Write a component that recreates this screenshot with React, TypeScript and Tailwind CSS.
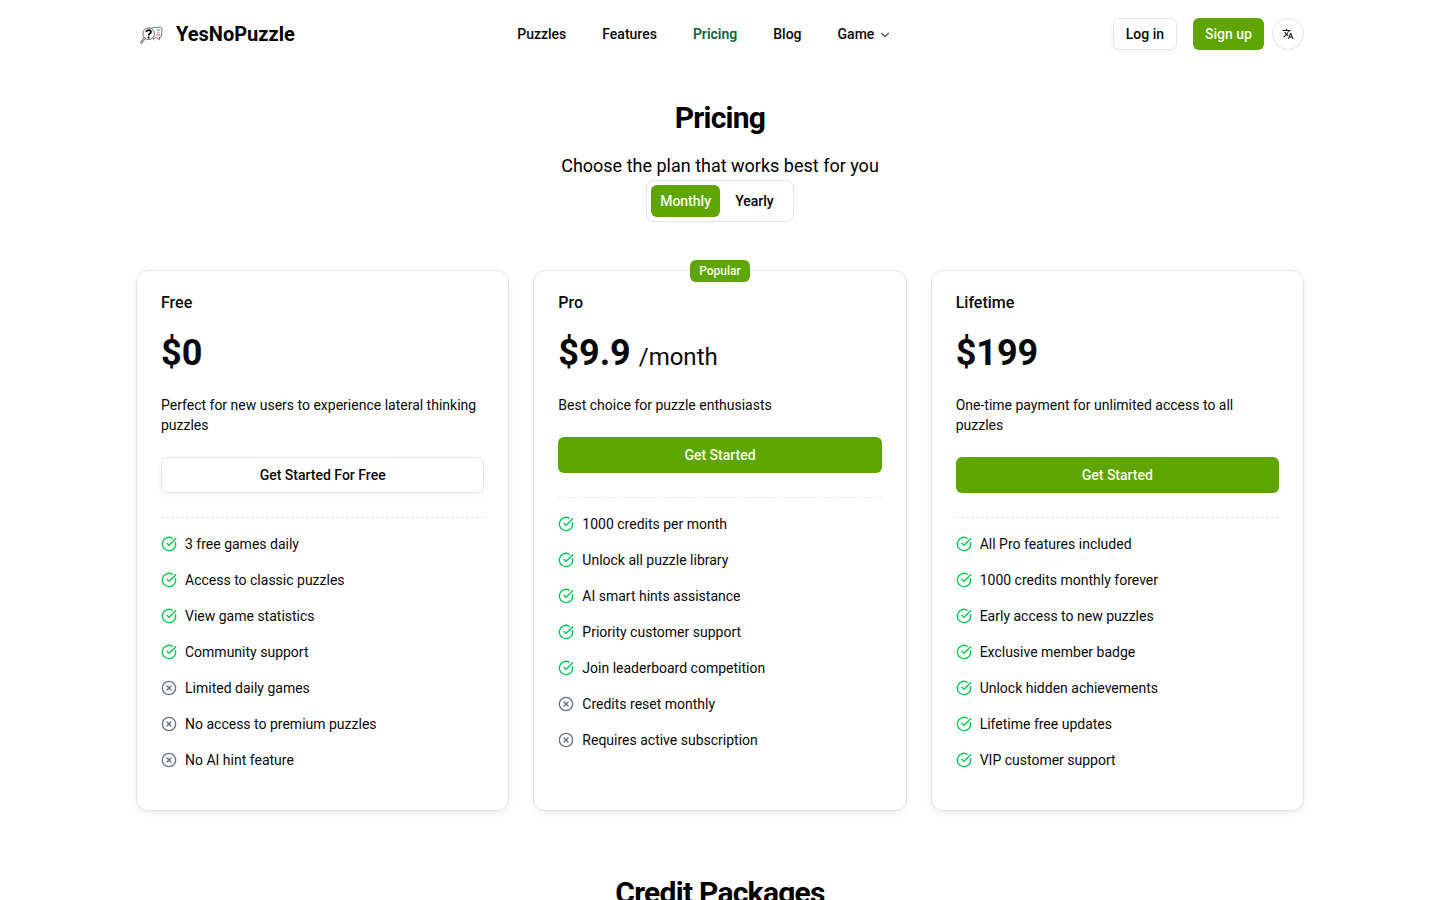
import { ChevronDown, CircleCheckBig, CircleX } from 'lucide-react';
import { MdTranslate } from 'react-icons/md';

type Plan = {
  name: string;
  price: string;
  period?: string;
  description: string;
  action: string;
  outlined?: boolean;
  popular?: boolean;
  features: string[];
  limits: string[];
};

const plans: Plan[] = [
  {
    name: 'Free',
    price: '$0',
    description: 'Perfect for new users to experience lateral thinking puzzles',
    action: 'Get Started For Free',
    outlined: true,
    features: ['3 free games daily', 'Access to classic puzzles', 'View game statistics', 'Community support'],
    limits: ['Limited daily games', 'No access to premium puzzles', 'No AI hint feature'],
  },
  {
    name: 'Pro',
    price: '$9.9',
    period: '/month',
    description: 'Best choice for puzzle enthusiasts',
    action: 'Get Started',
    popular: true,
    features: [
      '1000 credits per month',
      'Unlock all puzzle library',
      'AI smart hints assistance',
      'Priority customer support',
      'Join leaderboard competition',
    ],
    limits: ['Credits reset monthly', 'Requires active subscription'],
  },
  {
    name: 'Lifetime',
    price: '$199',
    description: 'One-time payment for unlimited access to all puzzles',
    action: 'Get Started',
    features: [
      'All Pro features included',
      '1000 credits monthly forever',
      'Early access to new puzzles',
      'Exclusive member badge',
      'Unlock hidden achievements',
      'Lifetime free updates',
      'VIP customer support',
    ],
    limits: [],
  },
];

const primary = 'bg-lime-600 text-lime-50';
const outline =
  'border border-neutral-200 bg-white text-neutral-950 shadow-[0_3px_6px_rgba(0,0,0,0.04)]';

function Logo() {
  return (
    <svg viewBox="0 0 32 32" className="size-8" fill="none" aria-hidden="true">
      <path
        d="M15 10.500 Q16 9.500 18 9.500 L24 9.200 Q26 9.200 26 11.200 L25.600 17 Q25.500 19.200 23.500 19.200 L23.600 21.800 L20.500 19.700 L17 20.500"
        stroke="#777"
        strokeWidth="1"
        fill="#fcfcfc"
      />
      <path d="M20.300 12h4" stroke="#7fd39b" strokeWidth="1.600" />
      <path d="M20.800 14.500h3" stroke="#efaaaa" strokeWidth="1.200" />
      <path d="M20 17h4" stroke="#e58f8f" strokeWidth="1.500" />
      <path d="M8.800 20 L5.200 24.400" stroke="#666" strokeWidth="2.400" strokeLinecap="round" />
      <path d="M8.800 20 L5.200 24.400" stroke="#eee" strokeWidth="0.900" strokeLinecap="round" />
      <circle cx="12.700" cy="15.700" r="5.800" fill="#fff" stroke="#666" strokeWidth="1" />
      <path
        d="M10.400 14.200 Q10.600 12.200 12.700 12.200 Q14.900 12.200 14.900 14 Q14.900 15.200 13.600 15.800 Q12.700 16.300 12.700 17.400"
        stroke="#000"
        strokeWidth="1.700"
      />
      <circle cx="12.700" cy="19.400" r="1" fill="#000" />
      <path d="M16.500 20.500l2 1.500" stroke="#888" strokeWidth="1" />
    </svg>
  );
}

function Header() {
  return (
    <header className="py-4">
      <div className="mx-auto flex h-9 max-w-[1200px] items-center justify-between px-4">
        <a href="#home" className="flex items-center gap-2 text-xl font-bold text-black">
          <Logo />
          YesNoPuzzle
        </a>
        <nav aria-label="Main" className="flex items-center gap-1 text-sm font-medium text-neutral-950">
          <a href="#puzzles" className="px-4">Puzzles</a>
          <a href="#features" className="px-4">Features</a>
          <a href="#pricing" aria-current="page" className="px-4 font-semibold text-[#166534]">Pricing</a>
          <a href="#blog" className="px-4">Blog</a>
          <button type="button" className="flex items-center gap-1 px-4">
            Game
            <ChevronDown className="mt-0.5 -mr-0.5 size-3.5 text-neutral-600" />
          </button>
        </nav>
        <div className="flex items-center gap-2 text-sm font-medium">
          <div className="flex items-center gap-4">
            <button type="button" className={`h-8 rounded-md px-3 ${outline}`}>Log in</button>
            <button type="button" className={`h-8 rounded-md px-3 ${primary}`}>Sign up</button>
          </div>
          <button
            type="button"
            aria-label="Change language"
            className="flex size-8 items-center justify-center rounded-full border border-neutral-200 text-neutral-950"
          >
            <MdTranslate className="size-3" />
          </button>
        </div>
      </div>
    </header>
  );
}

function PlanCard({ plan }: { plan: Plan }) {
  return (
    <article className="relative rounded-xl border border-neutral-200 bg-white px-6 pt-5 pb-10 text-neutral-950 shadow-[0_3px_6px_rgba(0,0,0,0.06)]">
      {plan.popular && (
        <div className="absolute inset-x-0 -top-[11px] flex justify-center">
          <span className={`rounded-md px-[9px] py-[3px] text-xs font-medium ${primary}`}>Popular</span>
        </div>
      )}
      <h2 className="text-base leading-6 font-medium">{plan.name}</h2>
      <p className="mt-[18px] flex items-baseline gap-2 text-4xl leading-10 font-bold">
        {plan.price}
        {plan.period && <span className="text-2xl font-normal">{plan.period}</span>}
      </p>
      <p className="mt-[22px] text-sm">{plan.description}</p>
      <button
        type="button"
        className={`mt-[22px] h-9 w-full rounded-md text-sm font-medium ${plan.outlined ? outline : primary}`}
      >
        {plan.action}
      </button>
      <hr className="mt-6 mb-4 border-dashed border-neutral-200" />
      <ul className="flex flex-col gap-4 text-sm">
        {plan.features.map((item) => (
          <li key={item} className="flex items-center gap-2">
            <CircleCheckBig className="size-4 text-green-500" />
            {item}
          </li>
        ))}
        {plan.limits.map((item) => (
          <li key={item} className="flex items-center gap-2">
            <CircleX className="size-4 text-gray-500" />
            {item}
          </li>
        ))}
      </ul>
    </article>
  );
}

export default function App() {
  return (
    <div className="min-h-screen bg-white font-[Roboto,sans-serif] text-black">
      <Header />
      <main className="mx-auto max-w-[1200px] px-4 pt-8 pb-16">
        <section className="flex flex-col items-center">
          <h1 className="text-3xl font-bold tracking-tight">Pricing</h1>
          <p className="mt-4 text-lg leading-7">Choose the plan that works best for you</p>
          <div
            role="group"
            aria-label="Billing period"
            className="grid grid-cols-2 rounded-lg border border-neutral-200 p-1 text-sm font-medium"
          >
            <button type="button" aria-pressed="true" className={`h-8 rounded-md px-[9px] ${primary}`}>Monthly</button>
            <button type="button" aria-pressed="false" className="h-8 rounded-md px-[9px]">Yearly</button>
          </div>
        </section>
        <section aria-label="Plans" className="mt-12 grid grid-cols-1 gap-6 md:grid-cols-3">
          {plans.map((plan) => (
            <PlanCard key={plan.name} plan={plan} />
          ))}
        </section>
        <section className="mt-16 text-center">
          <h2 className="text-3xl font-bold tracking-tight">Credit Packages</h2>
        </section>
      </main>
    </div>
  );
}
